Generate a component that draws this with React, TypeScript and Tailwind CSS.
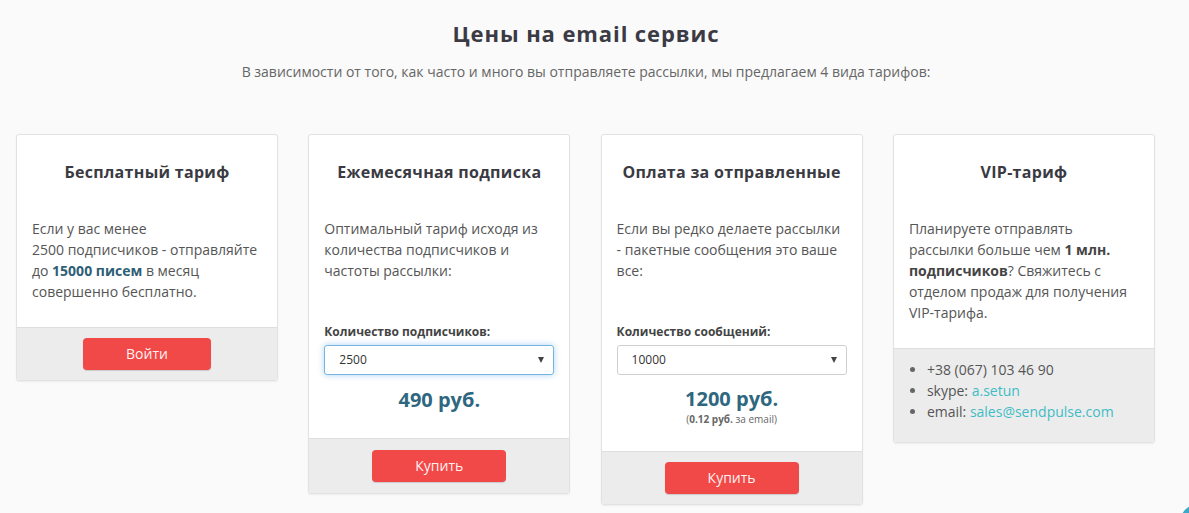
import React from "react";

const font = { fontFamily: '"Open Sans", "Noto Sans", sans-serif' };

function Arrow() {
  return (
    <span className="pointer-events-none absolute right-[9px] top-[11px] block h-0 w-0 border-x-[3.5px] border-t-[6px] border-x-transparent border-t-[#444]" />
  );
}

function Btn({ label, w }: { label: string; w: string }) {
  return (
    <button
      className={`${w} h-[32px] rounded-[4px] bg-[#f14848] text-[14px] leading-[32px] text-[#fff1f1] shadow-[0_1px_1px_rgba(0,0,0,0.15)]`}
    >
      {label}
    </button>
  );
}

function Card({ title, children, footer, footerClass }: { title: string; children: React.ReactNode; footer: React.ReactNode; footerClass: string }) {
  return (
    <div className="w-[262px] shrink-0 overflow-hidden rounded-[3px] border border-[#e2e2e2] bg-white shadow-[0_1px_2px_rgba(0,0,0,0.06)]">
      <div className="px-[15px] pt-[26px] pb-[25px]">
        <h3 className="text-center text-[16px] font-bold leading-[22px] tracking-[0.3px] text-[#3a3a42]">{title}</h3>
        <div className="mt-[35px]">{children}</div>
      </div>
      <div className={`border-t border-[#dedede] bg-[#ececec] ${footerClass}`}>{footer}</div>
    </div>
  );
}

function Dot() {
  return <span className="ml-[1px] mr-[12px] inline-block h-[5px] w-[5px] rounded-full bg-[#666]" />;
}

export default function App() {
  return (
    <div style={font} className="relative h-[513px] w-[1189px] overflow-hidden bg-[#fafafa]">
      <div className="w-[1172px]">
        <h1 className="pt-[18px] text-center text-[22px] font-bold leading-[30px] tracking-[0.9px] text-[#3b3b45]">Цены на email сервис</h1>
        <p className="mt-[14px] text-center text-[14px] leading-[20px] text-[#666]">
          В зависимости от того, как часто и много вы отправляете рассылки, мы предлагаем 4 вида тарифов:
        </p>
      </div>
      <div className="mt-[52px] flex items-start gap-[30.3px] pl-[16px]">
        <Card
          title="Бесплатный тариф"
          footerClass="flex justify-center py-[10px]"
          footer={<Btn label="Войти" w="w-[128px]" />}
        >
          <p className="text-[14px] leading-[21px] text-[#555]">
            Если у вас менее
            <br />
            2500 подписчиков - отправляйте до <b className="font-bold text-[#2e5f77]">15000 писем</b> в месяц совершенно бесплатно.
          </p>
        </Card>
        <Card
          title="Ежемесячная подписка"
          footerClass="flex justify-center py-[11px]"
          footer={<Btn label="Купить" w="w-[134px]" />}
        >
          <p className="h-[84px] text-[14px] leading-[21px] text-[#555]">
            Оптимальный тариф исходя из количества подписчиков и частоты рассылки:
          </p>
          <div className="mt-[21px] text-[12px] font-bold leading-[17px] text-[#444]">Количество подписчиков:</div>
          <div className="relative mt-[5px] h-[30px] rounded-[3px] border border-[#79b4e0] bg-white pl-[14px] text-[12px] leading-[28px] text-[#333] shadow-[0_0_6px_rgba(102,175,233,0.55)]">
            2500
            <Arrow />
          </div>
          <div className="mt-[12px] text-center text-[20px] font-bold leading-[26px] text-[#2f6780]">490 руб.</div>
        </Card>
        <Card
          title="Оплата за отправленные"
          footerClass="flex justify-center py-[10px]"
          footer={<Btn label="Купить" w="w-[134px]" />}
        >
          <p className="h-[84px] text-[14px] leading-[21px] text-[#555]">
            Если вы редко делаете рассылки - пакетные сообщения это ваше все:
          </p>
          <div className="mt-[21px] text-[12px] font-bold leading-[17px] text-[#444]">Количество сообщений:</div>
          <div className="relative mt-[5px] h-[30px] rounded-[3px] border border-[#cfcfcf] bg-white pl-[14px] text-[12px] leading-[28px] text-[#333]">
            10000
            <Arrow />
          </div>
          <div className="mt-[11px] text-center text-[20px] font-bold leading-[26px] text-[#2f6780]">1200 руб.</div>
          <div className="text-center text-[10px] leading-[14px] text-[#666]">
            (<b className="font-bold">0.12 руб.</b> за email)
          </div>
        </Card>
        <Card
          title="VIP-тариф"
          footerClass="px-[15px] pt-[10px] pb-[20px]"
          footer={
            <ul className="text-[14px] leading-[21px] text-[#555]">
              <li className="flex items-center"><Dot />+38 (067) 103 46 90</li>
              <li className="flex items-center"><Dot />skype:&nbsp;<span className="text-[#3fbcc6]">a.setun</span></li>
              <li className="flex items-center"><Dot />email:&nbsp;<span className="text-[#3fbcc6]">sales@sendpulse.com</span></li>
            </ul>
          }
        >
          <p className="text-[14px] leading-[21px] text-[#555]">
            Планируете отправлять рассылки больше чем <b className="font-bold text-[#444]">1 млн. подписчиков</b>? Свяжитесь с отделом продаж для получения VIP-тарифа.
          </p>
        </Card>
      </div>
      <div className="absolute left-[1181px] top-[505px] h-[30px] w-[30px] rounded-full bg-[#3aa8c8]" />
    </div>
  );
}
